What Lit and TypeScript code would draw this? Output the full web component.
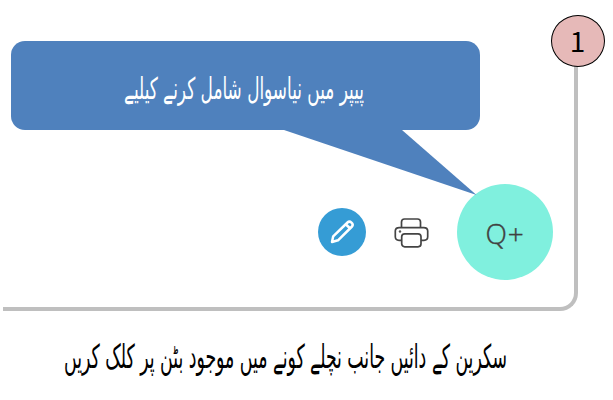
import { LitElement, html, css } from "lit";
import { customElement } from "lit/decorators.js";

@customElement("app-root")
export class AppRoot extends LitElement {
  static styles = css`
    :host {
      display: flex;
      flex-direction: column;
      position: relative;
      width: 613px;
      height: 400px;
      background: #fff;
    }
    .frame {
      box-sizing: border-box;
      margin: 41px 0 0 3px;
      width: 574.5px;
      height: 269.5px;
      border: solid #bfbfbf;
      border-width: 0 4px 4px 0;
      border-bottom-right-radius: 18px;
      display: flex;
      flex-direction: column;
      justify-content: space-between;
    }
    .callout {
      position: relative;
      margin-left: 8px;
      width: 469px;
      height: 89px;
      border-radius: 14px;
      background: #4f81bd;
    }
    .tail {
      position: absolute;
      left: 273px;
      top: 88px;
    }
    svg { display: block; overflow: visible; }
    text { font-family: "DejaVu Sans", "Noto Sans", sans-serif; }
    .callout text { font-size: 20px; fill: #fff; }
    .caption text { font-size: 22px; fill: #000; }
    .tools {
      display: flex;
      align-items: center;
      justify-content: flex-end;
      padding: 0 20.5px 27px 0;
    }
    .edit {
      width: 48px;
      height: 48px;
      margin-right: 28px;
      border-radius: 50%;
      background: #359cd5;
    }
    .print { margin-right: 28px; }
    .add {
      width: 96px;
      height: 96px;
      border-radius: 50%;
      background: #80f0de;
      color: #404040;
      display: flex;
      align-items: center;
      justify-content: center;
      font: 300 28px/1 "Open Sans", "Noto Sans", sans-serif;
      -webkit-text-stroke: 0.4px #404040;
      letter-spacing: 0.7px;
      padding: 2px 0 0 0;
      box-sizing: border-box;
    }
    .badge {
      position: absolute;
      left: 551px;
      top: 15px;
      box-sizing: border-box;
      width: 54px;
      height: 52px;
      border: 1.3px solid #000;
      border-radius: 50%;
      background: #e6b9b8;
      display: flex;
      align-items: center;
      justify-content: center;
      font: 28px/1 "Noto Sans CJK SC", Lato, sans-serif;
      padding: 0 1px 3px 0;
    }
  `;

  render() {
    return html`
      <div class="frame">
        <div class="callout">
          <svg width="469" height="89">
            <text x="113" y="39" transform="scale(1 1.5)" textLength="240"
              lengthAdjust="spacingAndGlyphs">پیپر میں نیاسوال شامل کرنے کیلیے</text>
          </svg>
          <svg class="tail" width="193" height="68">
            <path d="M0 1H118L192.500 66Z" fill="#4f81bd" />
          </svg>
        </div>
        <div class="tools">
          <div class="edit">
            <svg width="48" height="48" fill="none" stroke="#fff" stroke-width="2.500" stroke-linejoin="round">
              <path d="M14 34L15.200 28.300 29.500 14.500Q31.400 12.700 33.500 14.600 35.600 16.500 34 18.500L20 32.300Z" />
              <path d="M28 16.500L32.200 20.500" />
            </svg>
          </div>
          <svg class="print" width="35" height="32" fill="none" stroke="#444" stroke-width="1.700">
            <path d="M7.500 11V6Q7.500 3 10.500 3H23.500Q26.500 3 26.500 6V11" />
            <path d="M7.500 24.300H5Q1.300 24.300 1.300 20.800V15Q1.300 11.600 5.300 11.600H29.700Q33.700 11.600 33.700 15V20.800Q33.700 24.300 30 24.300H27" />
            <rect x="7.700" y="17.800" width="19.300" height="13" rx="3" fill="#fff" />
            <circle cx="6" cy="15.500" r="1.200" fill="#555" stroke="none" />
          </svg>
          <div class="add">Q+</div>
        </div>
      </div>
      <div class="badge">1</div>
      <svg class="caption" width="613" height="89">
        <text x="64" y="38" transform="scale(1 1.5)" textLength="443"
          lengthAdjust="spacingAndGlyphs">سکرین کے دائیں جانب نچلے کونے میں موجود بٹن پر کلک کریں</text>
      </svg>
    `;
  }
}
